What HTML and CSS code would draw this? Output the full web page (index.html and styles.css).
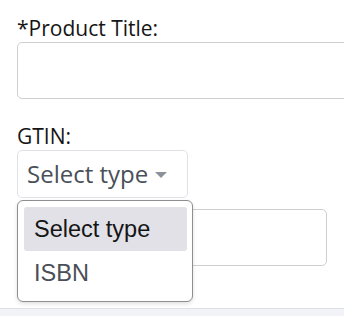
FILE: index.html
```html
<!DOCTYPE html>
<html lang="en">
<head>
<meta charset="utf-8">
<title>Product form</title>
<link rel="stylesheet" href="styles.css">
</head>
<body>
<div class="page">
  <form class="form">
    <div class="field">
      <label class="label">*Product Title:</label>
      <div class="input input-wide"></div>
    </div>
    <div class="field field-gtin">
      <label class="label">GTIN:</label>
      <div class="select-wrap">
        <div class="select">
          <span class="select-text">Select type</span>
          <span class="caret"></span>
        </div>
        <ul class="menu">
          <li class="option option-active">Select type</li>
          <li class="option">ISBN</li>
        </ul>
      </div>
      <div class="input input-gtin"></div>
    </div>
  </form>
  <div class="footer-band"></div>
</div>
</body>
</html>
```

FILE: styles.css
```css
html, body {
  margin: 0;
  padding: 0;
  background: #ffffff;
  overflow: hidden;
}

.page {
  width: 344px;
  height: 316px;
  display: flex;
  flex-direction: column;
  font-family: "Open Sans", "Liberation Sans", sans-serif;
  color: #212529;
}

.form {
  flex: 1;
  padding: 15px 0 0 17px;
  display: flex;
  flex-direction: column;
}

.field {
  display: flex;
  flex-direction: column;
}

.field-gtin {
  margin-top: 24px;
}

.label {
  font-size: 21px;
  line-height: 27px;
  color: #151515;
}

.input {
  box-sizing: border-box;
  border: 1px solid #cfcfcf;
  border-radius: 5px;
  background: #fff;
}

.input-wide {
  width: 340px;
  height: 57px;
}

.input-gtin {
  width: 310px;
  height: 57px;
  margin-top: 11px;
}

.select-wrap {
  position: relative;
  width: 171px;
}

.select {
  box-sizing: border-box;
  height: 48px;
  width: 171px;
  border: 1px solid #dfe3e8;
  border-radius: 5px;
  display: flex;
  align-items: center;
  padding-left: 9px;
  gap: 7px;
}

.select-text {
  font-size: 24px;
  line-height: 32px;
  color: #4a5058;
}

.caret {
  width: 0;
  height: 0;
  border-left: 6.5px solid transparent;
  border-right: 6.5px solid transparent;
  border-top: 6px solid #8b9199;
  margin-top: 1px;
}

.menu {
  position: absolute;
  top: 50px;
  left: 0;
  width: 176px;
  box-sizing: border-box;
  margin: 0;
  padding: 6px 5px 6px 6px;
  list-style: none;
  background: #fff;
  border: 1px solid #8e8e8e;
  border-radius: 6px;
  box-shadow: 0 2px 4px rgba(0, 0, 0, 0.12);
  z-index: 2;
}

.option {
  height: 44px;
  line-height: 44px;
  padding-left: 10px;
  font-family: "Liberation Sans", Arial, sans-serif;
  font-size: 23.5px;
  color: #4a4f57;
  border-radius: 3px;
}

.option-active {
  background: #e2e1e8;
  color: #151515;
}

.footer-band {
  height: 7px;
  background: #f1f3f6;
  border-top: 1px solid #dde1e7;
}
```
